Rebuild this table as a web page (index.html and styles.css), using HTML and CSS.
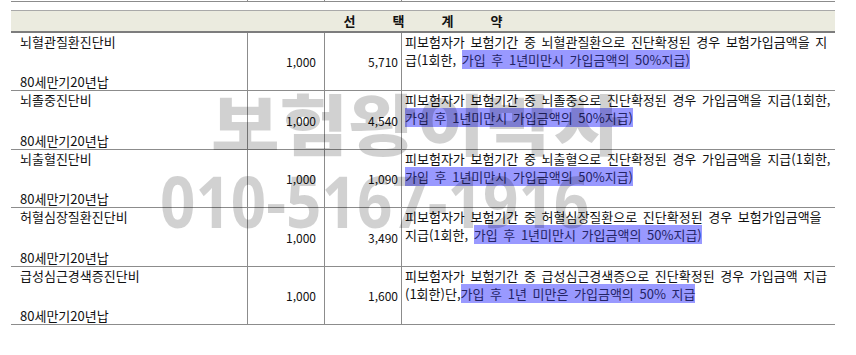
FILE: index.html
```html
<!DOCTYPE html>
<html lang="ko">
<head>
<meta charset="utf-8">
<title>선택계약</title>
<link rel="stylesheet" href="styles.css">
</head>
<body>
<div class="page">
  <div class="prev">
    <div class="pc c1"></div><div class="pc c2"></div><div class="pc c3"></div><div class="pc c4"></div>
  </div>
  <div class="head">선택계약</div>
  <div class="grid">
    <div class="row">
      <div class="name"><span>뇌혈관질환진단비</span><span>80세만기20년납</span></div>
      <div class="num n1">1,000</div>
      <div class="num n2">5,710</div>
      <div class="desc">피보험자가 보험기간 중 뇌혈관질환으로 진단확정된 경우 보험가입금액을 지<br>급(1회한, <span class="hl">가입 후 1년미만시 가입금액의 50%지급)</span></div>
    </div>
    <div class="row">
      <div class="name"><span>뇌졸중진단비</span><span>80세만기20년납</span></div>
      <div class="num n1">1,000</div>
      <div class="num n2">4,540</div>
      <div class="desc">피보험자가 보험기간 중 뇌졸중으로 진단확정된 경우 가입금액을 지급(1회한,<br><span class="hl">가입 후 1년미만시 가입금액의 50%지급)</span></div>
    </div>
    <div class="row">
      <div class="name"><span>뇌출혈진단비</span><span>80세만기20년납</span></div>
      <div class="num n1">1,000</div>
      <div class="num n2">1,090</div>
      <div class="desc">피보험자가 보험기간 중 뇌출혈으로 진단확정된 경우 가입금액을 지급(1회한,<br><span class="hl">가입 후 1년미만시 가입금액의 50%지급)</span></div>
    </div>
    <div class="row">
      <div class="name"><span>허혈심장질환진단비</span><span>80세만기20년납</span></div>
      <div class="num n1">1,000</div>
      <div class="num n2">3,490</div>
      <div class="desc">피보험자가 보험기간 중 허혈심장질환으로 진단확정된 경우 보험가입금액을<br>지급(1회한, <span class="hl">가입 후 1년미만시 가입금액의 50%지급)</span></div>
    </div>
    <div class="row">
      <div class="name"><span>급성심근경색증진단비</span><span>80세만기20년납</span></div>
      <div class="num n1">1,000</div>
      <div class="num n2">1,600</div>
      <div class="desc">피보험자가 보험기간 중 급성심근경색증으로 진단확정된 경우 가입금액 지급<br>(1회한)단,<span class="hl">가입 후 1년 미만은 가입금액의 50% 지급</span></div>
    </div>
  </div>
  <div class="wm" aria-hidden="true">
    <div class="wm1">보험왕이박사</div>
    <div class="wm2">010-5167-1916</div>
  </div>
</div>
</body>
</html>
```

FILE: styles.css
```css
html, body {
  margin: 0;
  padding: 0;
  background: #fff;
}
.page {
  position: relative;
  width: 856px;
  height: 355px;
  overflow: hidden;
  padding-left: 11px;
  box-sizing: border-box;
  font-family: "Noto Sans CJK KR", "Noto Sans", sans-serif;
  font-size: 13px;
  color: #111;
}
.prev {
  display: grid;
  grid-template-columns: 236px 77px 77px 434px;
  width: 824px;
  height: 1px;
  border-bottom: 1px solid #8c8c8c;
}
.pc + .pc {
  border-left: 1px solid #8c8c8c;
}
.head {
  width: 824px;
  margin-top: 8px;
  height: 20px;
  line-height: 20px;
  border-top: 1px solid #a9a9a9;
  border-bottom: 2px solid #7d7d7d;
  background: #ebebdf;
  text-align: center;
  font-weight: 700;
  letter-spacing: 37px;
  text-indent: 37px;
  color: #111;
}
.grid {
  width: 824px;
}
.row {
  display: grid;
  grid-template-columns: 236px 77px 77px 434px;
  height: 58px;
  box-sizing: border-box;
  border-bottom: 1px solid #8c8c8c;
  line-height: 16px;
}
.row:nth-child(even) {
  height: 59px;
}
.row > div + div {
  border-left: 1px solid #8c8c8c;
}
.name {
  display: flex;
  flex-direction: column;
  justify-content: space-between;
  padding: 1px 0 0 9px;
}
.num {
  display: flex;
  align-items: center;
  justify-content: flex-end;
  font-size: 12px;
  padding-top: 1px;
}
.n1 { padding-right: 8px; }
.n2 { padding-right: 3px; }
.desc {
  padding: 0 0 0 3px;
  line-height: 18px;
  white-space: nowrap;
  word-spacing: 2px;
}
.hl {
  background: #9999ff;
  color: #242466;
}
.wm {
  position: absolute;
  inset: 0;
  pointer-events: none;
  color: rgba(0, 0, 0, 0.18);
  font-weight: 900;
  white-space: nowrap;
}
.wm1 {
  position: absolute;
  left: 211px;
  top: 80px;
  font-size: 66px;
  line-height: 82px;
  transform: scaleX(1.13);
  transform-origin: left top;
}
.wm2 {
  position: absolute;
  left: 160px;
  top: 158px;
  font-family: "Noto Sans", sans-serif;
  font-weight: 700;
  font-size: 72px;
  line-height: 84px;
  transform: scaleX(0.86);
  transform-origin: left top;
}
```
